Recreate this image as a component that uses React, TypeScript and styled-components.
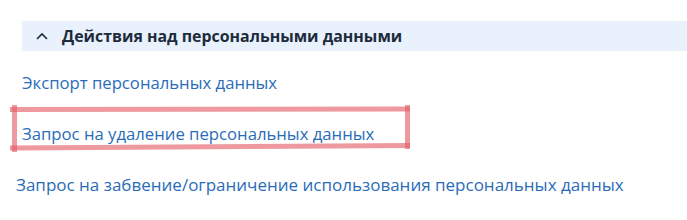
import styled, { createGlobalStyle } from "styled-components"

const GlobalStyle = createGlobalStyle`
  html, body {
    margin: 0;
    padding: 0;
    background: #ffffff;
  }
  body {
    font-family: "Open Sans", "Noto Sans", sans-serif;
  }
`

const Page = styled.div`
  width: 687px;
  height: 220px;
  padding-top: 21px;
  box-sizing: border-box;
  overflow: hidden;
`

const Header = styled.div`
  margin-left: 22px;
  height: 30px;
  background: #e8f1fc;
  display: flex;
  align-items: center;
  padding-left: 14px;
  gap: 14px;
`

const Title = styled.span`
  font-weight: 700;
  font-size: 15.9px;
  color: #1e2b3c;
`

const Links = styled.div`
  display: flex;
  flex-direction: column;
  padding-top: 20px;
  gap: 29px;
`

const LinkRow = styled.div<{ $indent: number }>`
  position: relative;
  padding-left: ${p => p.$indent}px;
  height: 22px;
  display: flex;
  align-items: center;
`

const Link = styled.a<{ $size?: number }>`
  font-size: ${p => p.$size ?? 16.7}px;
  color: #2a6cb8;
  text-decoration: none;
  white-space: nowrap;
`

const Mark = styled.svg`
  position: absolute;
  left: 10px;
  top: -18px;
  pointer-events: none;
`

const Chevron = () => (
  <svg width="12" height="8" viewBox="0 0 12 8">
    <path d="M1 7 L6 2 L11 7" fill="none" stroke="#1e2b3c" strokeWidth="1.6" />
  </svg>
)

export default function App() {
  return (
    <>
      <GlobalStyle />
      <Page>
        <Header>
          <Chevron />
          <Title>Действия над персональными данными</Title>
        </Header>
        <Links>
          <LinkRow $indent={22}>
            <Link href="#">Экспорт персональных данных</Link>
          </LinkRow>
          <LinkRow $indent={22}>
            <Link href="#">Запрос на удаление персональных данных</Link>
            <Mark width="404" height="50" viewBox="0 0 404 50">
              <g stroke="rgba(226, 90, 100, 0.62)" strokeWidth="5" fill="none">
                <line x1="0" y1="5.5" x2="400" y2="5" />
                <line x1="0" y1="44" x2="400" y2="41.5" />
                <line x1="4.5" y1="1" x2="4.5" y2="48" />
                <line x1="397.5" y1="1" x2="397.5" y2="45" />
              </g>
            </Mark>
          </LinkRow>
          <LinkRow $indent={16}>
            <Link href="#" $size={17}>
              Запрос на забвение/ограничение использования персональных данных
            </Link>
          </LinkRow>
        </Links>
      </Page>
    </>
  )
}
